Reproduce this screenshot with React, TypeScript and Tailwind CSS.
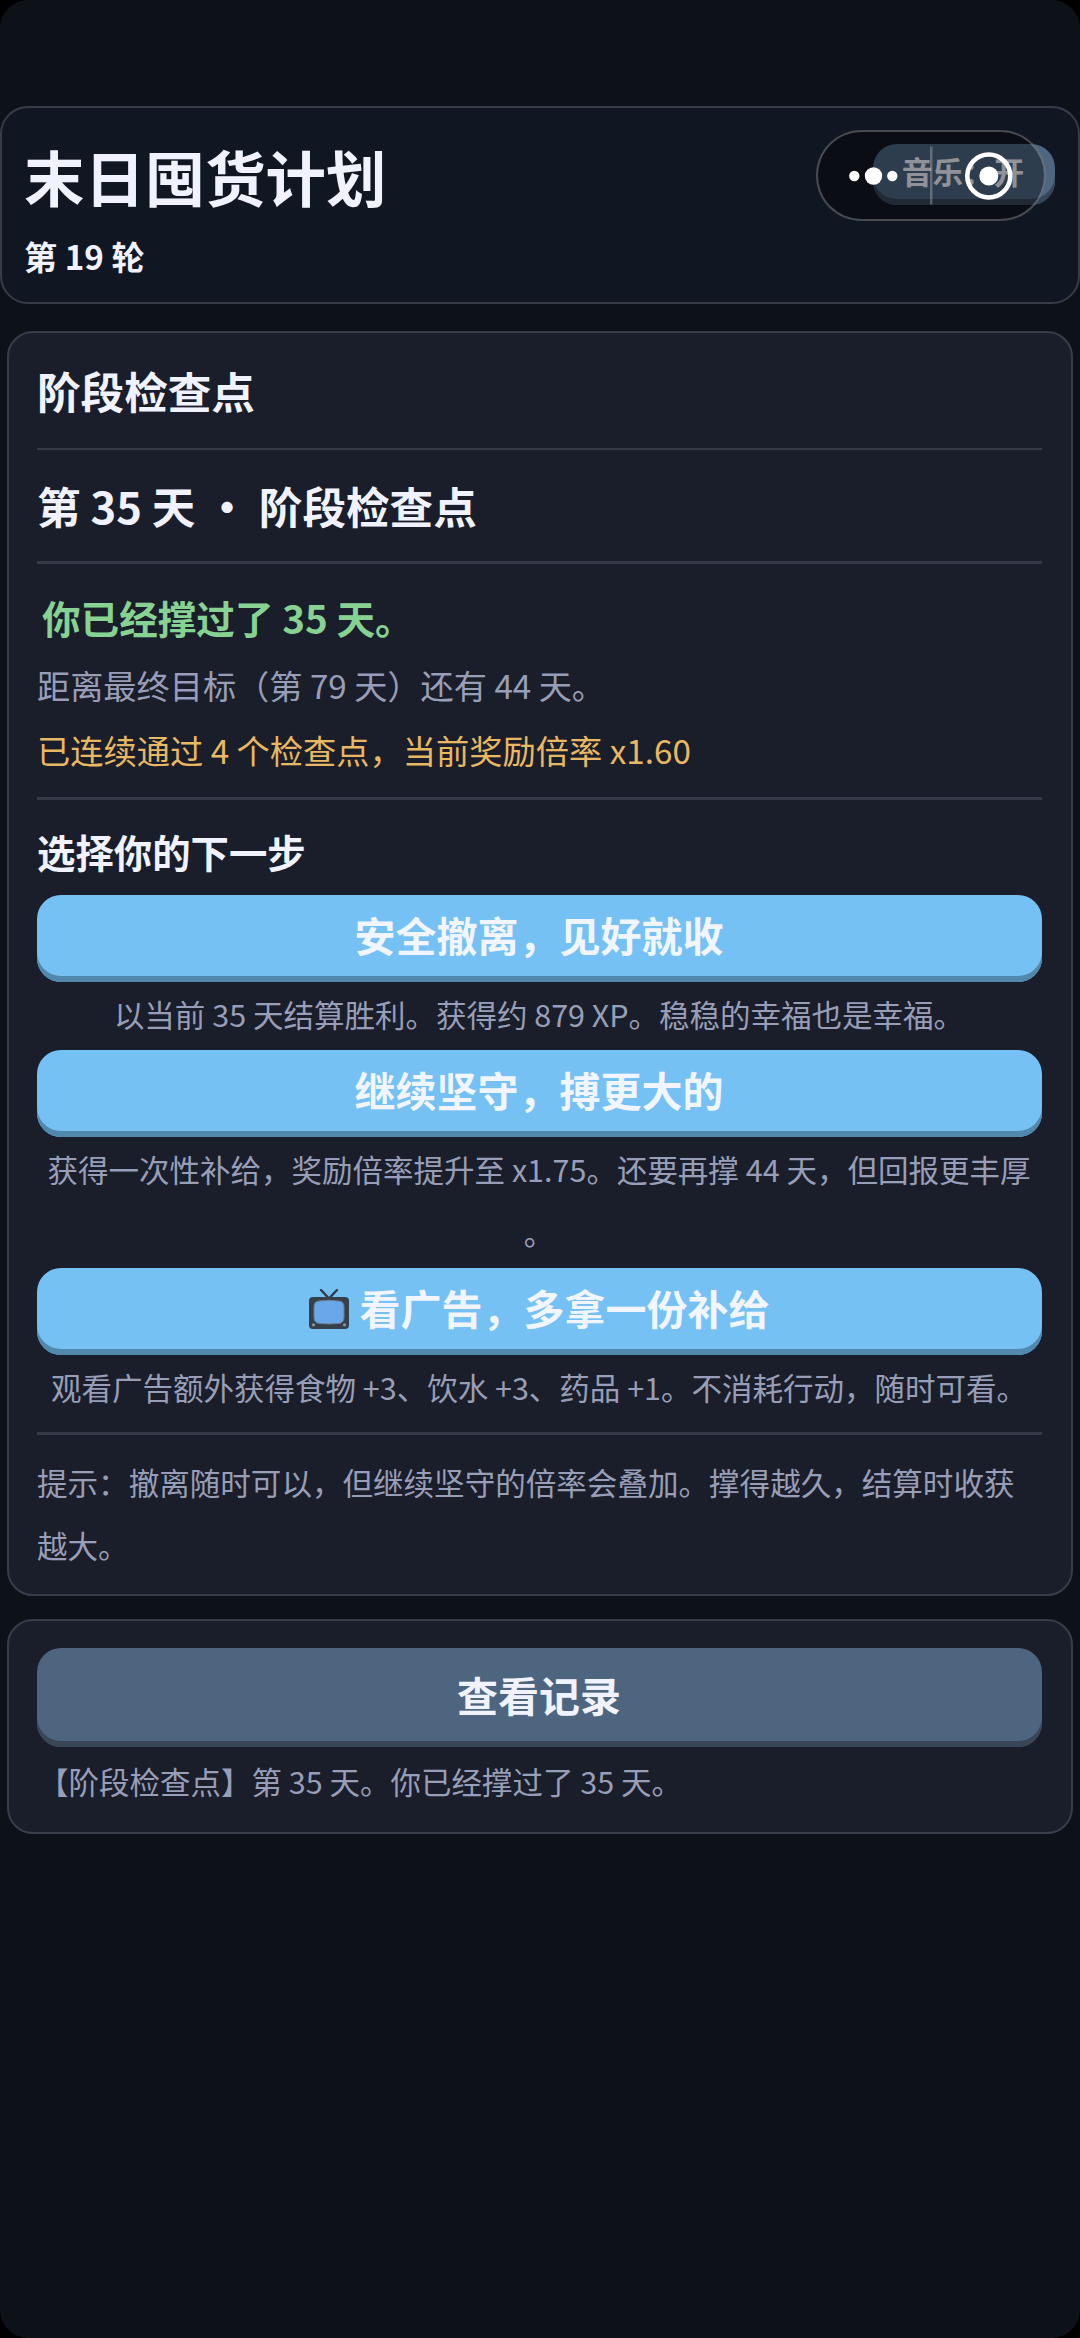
interface ChoiceProps {
  label: string;
  desc: string;
  withTv?: boolean;
  tall?: boolean;
}

function TvIcon() {
  return (
    <svg width="40" height="40" viewBox="0 0 40 40" fill="none" className="mr-[11px] mt-[3px] shrink-0">
      <path d="M12 1L20 9.5L28 1" stroke="#2f3b44" strokeWidth="2.4" strokeLinecap="round" />
      <rect x="0" y="8" width="40" height="32" rx="4" fill="#35404a" />
      <path d="M10 12Q20 10.6 30 12Q35 12.4 35 18V28Q35 34 30 34.4Q20 35.6 10 34.4Q5 34 5 28V18Q5 12.4 10 12Z" fill="#69a7e8" stroke="#6a7e92" strokeWidth="1" />
      <circle cx="4.5" cy="35.8" r="1.6" fill="#8a969e" />
      <circle cx="35.5" cy="35.8" r="1.6" fill="#8a969e" />
    </svg>
  );
}

function Divider() {
  return <div className="h-[2.5px] shrink-0 bg-[#353947]" />;
}

function Choice({ label, desc, withTv, tall }: ChoiceProps) {
  return (
    <div>
      <button className="flex h-[87px] w-full items-center justify-center rounded-[24px] bg-[#76c1f3] pb-[8px] pr-[1px] text-[41px] font-bold leading-none text-[#f0f5ff] shadow-[inset_0_-6px_0_#5188ac]">
        {withTv && <TvIcon />}
        {label}
      </button>
      <p className={`-ml-px pt-px text-center text-[30.5px] leading-[63px] text-[#989eb8] [line-break:anywhere] ${tall ? 'h-[131px]' : 'h-[68px]'}`}>{desc}</p>
    </div>
  );
}

function Capsule() {
  return (
    <div className="absolute left-[816px] top-[24px] h-[91px] w-[230px] rounded-full border-[2.5px] border-white/25 bg-black/40">
      <svg width="226" height="87" viewBox="0 0 226 87" fill="white">
        <circle cx="36.3" cy="44" r="5.2" />
        <circle cx="55.5" cy="44" r="8.7" />
        <circle cx="74.3" cy="44" r="5.2" />
        <rect x="112" y="14.5" width="2.5" height="58" fillOpacity="0.25" />
        <circle cx="170.8" cy="44" r="21.5" fill="none" stroke="white" strokeWidth="4.6" />
        <circle cx="170.8" cy="44" r="9.5" />
      </svg>
    </div>
  );
}

export default function App() {
  return (
    <div className="h-[2338px] w-[1080px] overflow-hidden bg-black font-['Noto_Sans_CJK_SC',sans-serif] text-[#f0f3ff]">
      <div className="h-full rounded-[28px] bg-[#0d1118] pt-[106px]">
        <header className="relative h-[198px] rounded-[28px] border-2 border-[#383c48] bg-[#111722] pl-[22px]">
          <h1 className="pt-[25px] text-[60.4px] font-bold leading-[86px]">末日囤货计划</h1>
          <div className="pt-[15px] text-[33.2px] font-bold leading-[44px]">第 19 轮</div>
          <button className="absolute left-[871px] top-[36px] flex h-[61px] w-[182px] items-center justify-center rounded-[24px] bg-[#4e6680] pb-[7px] pr-[2px] text-[30.6px] font-bold leading-none shadow-[inset_0_-6px_0_#364557]">
            音乐：开
          </button>
          <div className="absolute -left-[2px] -top-[2px]">
            <Capsule />
          </div>
        </header>

        <main className="mt-[27px] px-[7px]">
          <section className="h-[1265px] rounded-[26px] border-2 border-[#393d4a] bg-[#1a1e2a] pl-[28px] pr-[29px]">
            <h2 className="h-[114.5px] pt-[25px] text-[43.6px] font-bold leading-[64px]">阶段检查点</h2>
            <Divider />
            <h2 className="h-[111px] pt-[23px] text-[43.6px] font-bold leading-[64px]">第 35 天 ・ 阶段检查点</h2>
            <Divider />
            <p className="h-[89.5px] pl-[5px] pt-[25px] text-[38.6px] font-bold leading-[56px] text-[#87d293]">你已经撑过了 35 天。</p>
            <p className="h-[65px] text-[33.2px] leading-[64px] text-[#989eb8]">距离最终目标（第 79 天）还有 44 天。</p>
            <p className="h-[79px] text-[33.25px] leading-[64px] text-[#e9b862]">已连续通过 4 个检查点，当前奖励倍率 x1.60</p>
            <Divider />
            <h3 className="h-[95.5px] pt-[23px] text-[38.4px] font-bold leading-[56px]">选择你的下一步</h3>
            <Choice label="安全撤离，见好就收" desc="以当前 35 天结算胜利。获得约 879 XP。稳稳的幸福也是幸福。" />
            <Choice label="继续坚守，搏更大的" desc="获得一次性补给，奖励倍率提升至 x1.75。还要再撑 44 天，但回报更丰厚。" tall />
            <Choice label="看广告，多拿一份补给" desc="观看广告额外获得食物 +3、饮水 +3、药品 +1。不消耗行动，随时可看。" withTv />
            <div className="h-[9px]" />
            <Divider />
            <p className="pt-[16px] text-[30.55px] leading-[63px] text-[#989eb8]">提示：撤离随时可以，但继续坚守的倍率会叠加。撑得越久，结算时收获越大。</p>
          </section>

          <section className="mt-[23px] h-[215px] rounded-[26px] border-2 border-[#393d4a] bg-[#1a1e2a] pl-[28px] pr-[29px] pt-[27px]">
            <button className="flex h-[99px] w-full items-center justify-center rounded-[24px] bg-[#4d657f] pb-[7px] pr-[1px] text-[41px] font-bold leading-none shadow-[inset_0_-6px_0_#384658]">
              查看记录
            </button>
            <p className="pl-px pt-[3px] text-[30.5px] leading-[63px] text-[#989eb8]">【阶段检查点】第 35 天。你已经撑过了 35 天。</p>
          </section>
        </main>
      </div>
    </div>
  );
}
